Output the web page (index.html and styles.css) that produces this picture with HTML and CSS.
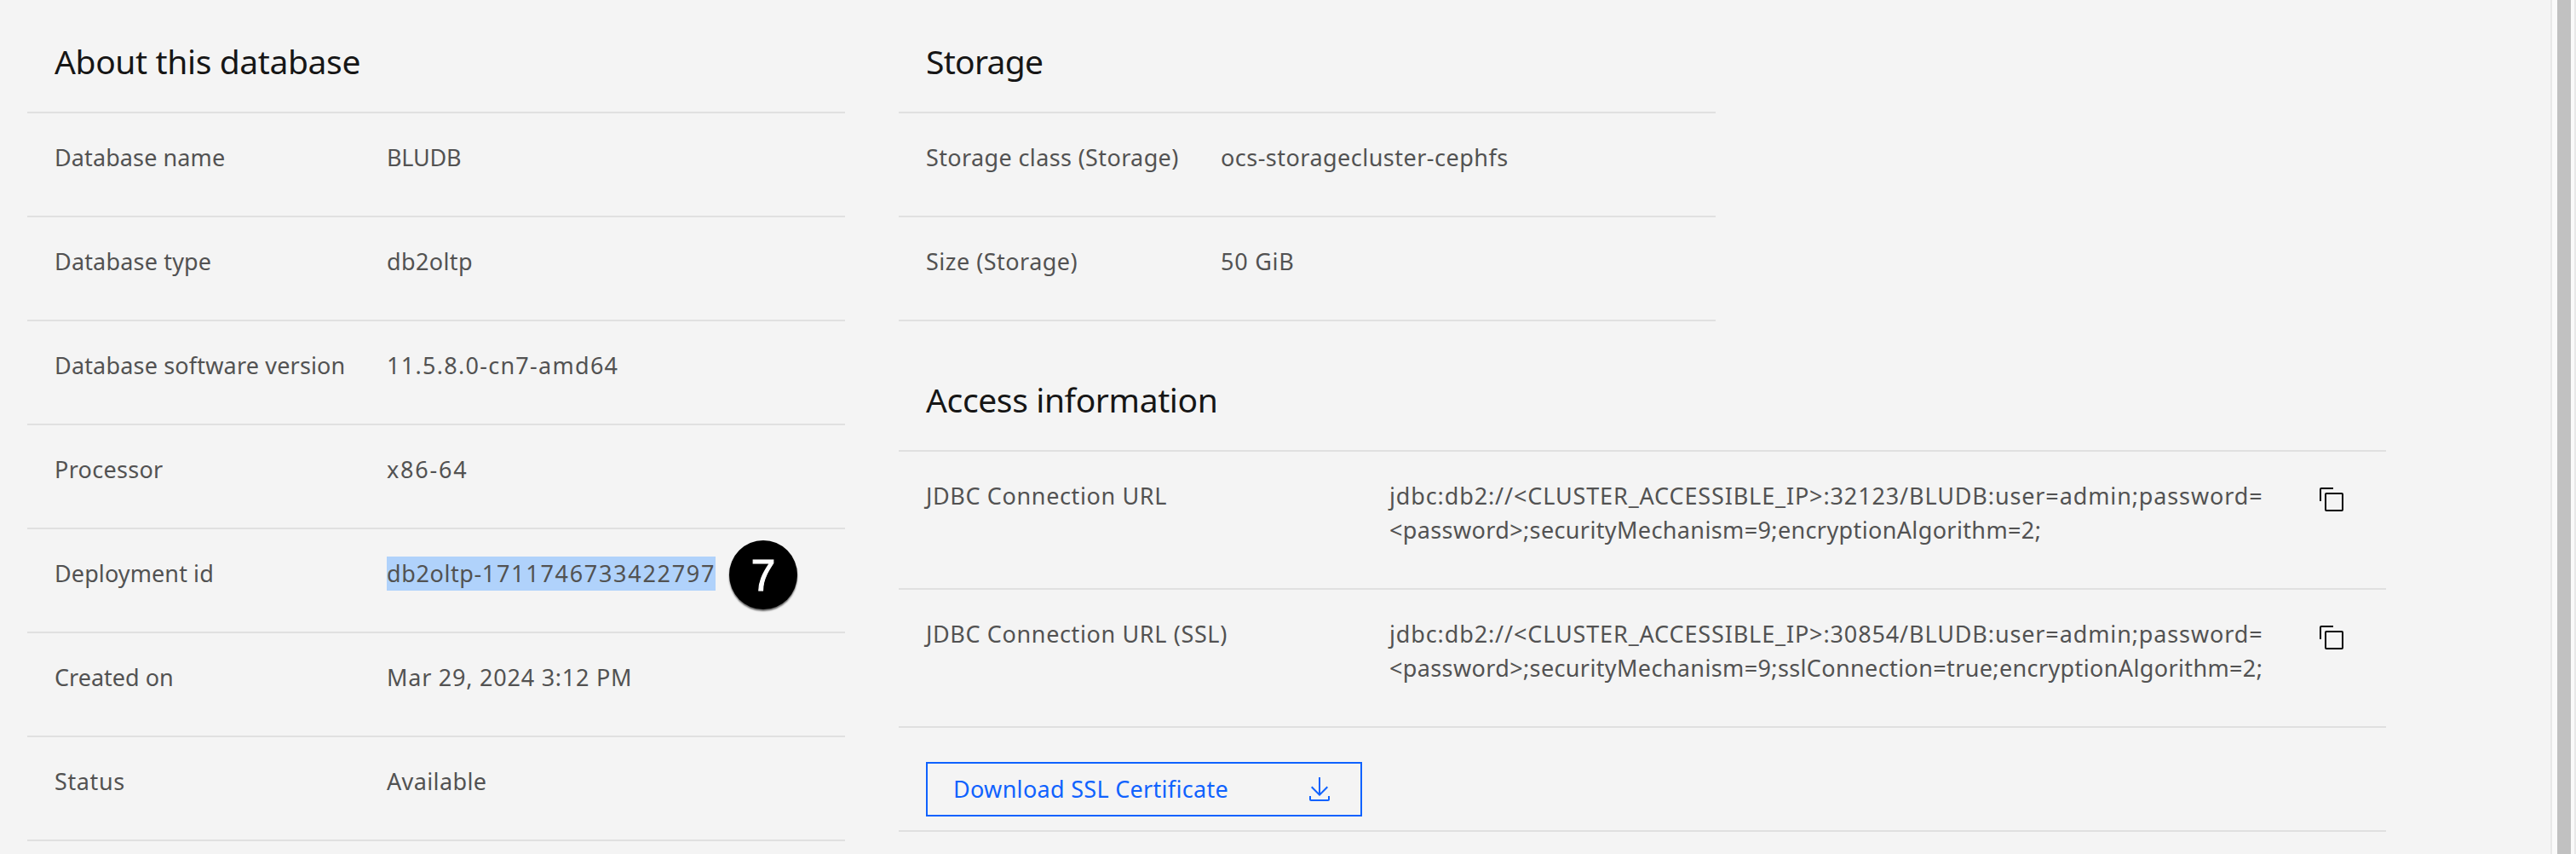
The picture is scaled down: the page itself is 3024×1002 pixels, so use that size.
FILE: index.html
```html
<!DOCTYPE html>
<html lang="en">
<head>
<meta charset="utf-8">
<title>Database details</title>
<link rel="stylesheet" href="styles.css">
</head>
<body>
<main class="page">
  <section class="panel about">
    <h2 class="title">About this database</h2>
    <div class="row"><span class="label t-1">Database name</span><span class="value t-neg">BLUDB</span></div>
    <div class="row"><span class="label t-2">Database type</span><span class="value t-4">db2oltp</span></div>
    <div class="row"><span class="label t-2">Database software version</span><span class="value t-13">11.5.8.0-cn7-amd64</span></div>
    <div class="row"><span class="label t-3">Processor</span><span class="value t-18">x86-64</span></div>
    <div class="row"><span class="label t-1">Deployment id</span><span class="value"><mark class="selected">db2oltp-<span class="t-17">1711746733422797</span></mark><b class="step">7</b></span></div>
    <div class="row"><span class="label">Created on</span><span class="value t-8">Mar 29, 2024 3:12 PM</span></div>
    <div class="row"><span class="label t-6">Status</span><span class="value t-4">Available</span></div>
  </section>
  <div class="side">
    <section class="panel storage">
      <h2 class="title title-storage">Storage</h2>
      <div class="row"><span class="label t-4">Storage class (Storage)</span><span class="value t-5">ocs-storagecluster-cephfs</span></div>
      <div class="row"><span class="label t-5">Size (Storage)</span><span class="value t-8">50 GiB</span></div>
    </section>
    <section class="panel access">
      <h2 class="title">Access information</h2>
      <div class="row">
        <span class="label t-6">JDBC Connection URL</span>
        <span class="value"><span class="t-9">jdbc:db2://&lt;CLUSTER_ACCESSIBLE_IP&gt;:32123/BLUDB:user=admin;password=</span><br><span class="t-4">&lt;password&gt;;securityMechanism=9;encryptionAlgorithm=2;</span></span>
        <svg class="copy" viewBox="0 0 32 32"><path d="M28 10v18H10V10h18m0-2H10a2 2 0 0 0-2 2v18a2 2 0 0 0 2 2h18a2 2 0 0 0 2-2V10a2 2 0 0 0-2-2Z"/><path d="M4 18H2V4a2 2 0 0 1 2-2h14v2H4Z"/></svg>
      </div>
      <div class="row">
        <span class="label t-6">JDBC Connection URL (SSL)</span>
        <span class="value"><span class="t-9">jdbc:db2://&lt;CLUSTER_ACCESSIBLE_IP&gt;:30854/BLUDB:user=admin;password=</span><br><span class="t-4">&lt;password&gt;;securityMechanism=9;sslConnection=true;encryptionAlgorithm=2;</span></span>
        <svg class="copy" viewBox="0 0 32 32"><path d="M28 10v18H10V10h18m0-2H10a2 2 0 0 0-2 2v18a2 2 0 0 0 2 2h18a2 2 0 0 0 2-2V10a2 2 0 0 0-2-2Z"/><path d="M4 18H2V4a2 2 0 0 1 2-2h14v2H4Z"/></svg>
      </div>
      <div class="actions">
        <button class="download"><span class="t-3">Download SSL Certificate</span>
          <svg class="download-icon" viewBox="0 0 32 32"><path d="M26 24v4H6v-4H4v4a2 2 0 0 0 2 2h20a2 2 0 0 0 2-2v-4zM26 14l-1.41-1.41L17 20.17V2h-2v18.17l-7.59-7.58L6 14l10 10 10-10z"/></svg>
        </button>
      </div>
    </section>
  </div>
</main>
<div class="scrollbar"><div class="thumb"></div></div>
</body>
</html>
```
FILE: styles.css
```css
* { box-sizing: border-box; }
body {
  margin: 0;
  height: 1002px;
  display: flex;
  justify-content: space-between;
  overflow: hidden;
  background: #f4f4f4;
  color: #525252;
  font: 27px/40px "Noto Sans", "Open Sans", sans-serif;
}
.page { display: flex; gap: 63px; padding-left: 32px; }
.about { width: 960px; }
.side { width: 1746px; }
.storage { width: 959px; }
.title {
  margin: 0;
  height: 133px;
  padding: 46px 32px 0;
  border-bottom: 2px solid #e0e0e0;
  color: #161616;
  font-size: 39px;
  font-weight: 400;
  line-height: 52px;
  letter-spacing: -0.38px;
}
.title-storage { letter-spacing: -0.7px; }
.access .title { height: 153px; padding-top: 66px; }
.row {
  display: flex;
  height: 122px;
  padding: 32px 32px 0;
  border-bottom: 2px solid #e0e0e0;
  white-space: nowrap;
}
.about .label { width: 390px; }
.storage .label { width: 346px; }
.access .label { width: 544px; }
.access .row { height: 162px; }
.value { display: block; position: relative; }
.access .value { flex: 1; }
.selected {
  display: inline-block;
  height: 40px;
  width: 386px;
  background: #b0d2fb;
  color: inherit;
  letter-spacing: 0.6px;
}
.step {
  position: absolute;
  left: 402px;
  top: -19px;
  width: 80px;
  height: 81px;
  border-radius: 50%;
  background: #000;
  box-shadow: 0 2px 2px rgba(0, 0, 0, 0.6);
  color: #fff;
  font: 400 52px/82px "Liberation Sans", Arial, sans-serif;
  -webkit-text-stroke: 1px #fff;
  text-align: center;
}
.copy { width: 32px; height: 32px; margin: 8px 16px 0 0; fill: #000; }
.actions {
  height: 122px;
  padding: 40px 32px 0;
  border-bottom: 2px solid #e0e0e0;
}
.download {
  display: flex;
  align-items: center;
  justify-content: space-between;
  width: 512px;
  height: 64px;
  padding: 0 32px 0 30px;
  border: 2px solid #0f62fe;
  background: transparent;
  color: #0f62fe;
  font: inherit;
}
.download-icon { width: 32px; height: 32px; fill: currentColor; }
.t-neg { letter-spacing: -0.2px; }
.t-1 { letter-spacing: 0.1px; }
.t-2 { letter-spacing: 0.17px; }
.t-3 { letter-spacing: 0.3px; }
.t-4 { letter-spacing: 0.37px; }
.t-5 { letter-spacing: 0.48px; }
.t-6 { letter-spacing: 0.63px; }
.t-8 { letter-spacing: 0.76px; }
.t-9 { letter-spacing: 0.87px; }
.t-13 { letter-spacing: 1.28px; }
.t-17 { letter-spacing: 1.7px; }
.t-18 { letter-spacing: 1.8px; }
.scrollbar {
  width: 30px;
  padding: 0 4px 0 6px;
  border: solid #e8e8e8;
  border-width: 0 2px;
  background: #fafafa;
}
.thumb { height: 100%; background: #c1c1c1; }
```
